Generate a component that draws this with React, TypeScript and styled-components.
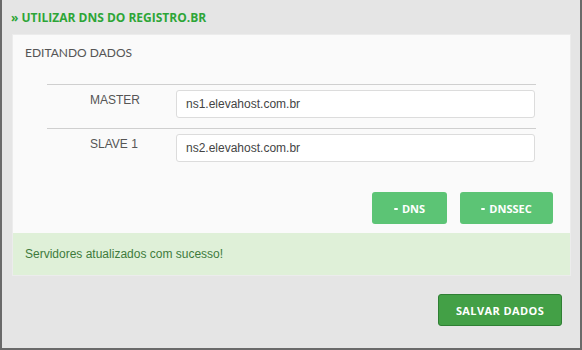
import React from 'react';
import styled, { createGlobalStyle } from 'styled-components';

const GlobalStyle = createGlobalStyle`
  html, body {
    margin: 0;
    padding: 0;
    background: #e5e5e5;
  }
  * {
    box-sizing: border-box;
  }
`;

interface DnsServer {
  label: string;
  value: string;
}

const servers: DnsServer[] = [
  { label: 'MASTER', value: 'ns1.elevahost.com.br' },
  { label: 'SLAVE 1', value: 'ns2.elevahost.com.br' },
];

const App = () => {
  return (
    <>
      <GlobalStyle />
      <Frame>
        <Title>» UTILIZAR DNS DO REGISTRO.BR</Title>
        <Panel>
          <PanelBody>
            <PanelHeading>EDITANDO DADOS</PanelHeading>
            <ServerTable>
              {servers.map((server) => (
                <ServerRow key={server.label}>
                  <ServerLabel>{server.label}</ServerLabel>
                  <ServerInput defaultValue={server.value} />
                </ServerRow>
              ))}
            </ServerTable>
            <Actions>
              <LightButton width={75}>
                <Dash /> DNS
              </LightButton>
              <LightButton width={93}>
                <Dash /> DNSSEC
              </LightButton>
            </Actions>
          </PanelBody>
          <SuccessAlert>Servidores atualizados com sucesso!</SuccessAlert>
        </Panel>
        <Footer>
          <SaveButton>SALVAR DADOS</SaveButton>
        </Footer>
      </Frame>
    </>
  );
};

export default App;

const Frame = styled.div`
  width: 582px;
  height: 350px;
  background: #e5e5e5;
  border-left: 2px solid #6a6a6a;
  border-right: 2px solid #6a6a6a;
  border-bottom: 2px solid #6a6a6a;
  display: flex;
  flex-direction: column;
`;

const Title = styled.div`
  padding: 9px 0 0 9px;
  height: 34px;
  font-family: 'Open Sans', 'Liberation Sans', sans-serif;
  font-weight: 700;
  font-size: 12px;
  color: #2da537;
`;

const Panel = styled.div`
  margin: 0 9px 0 10px;
  border: 1px solid #ececec;
  background: #fafafa;
`;

const PanelBody = styled.div`
  padding: 0 17px 9px 12px;
`;

const PanelHeading = styled.div`
  height: 49px;
  padding-top: 10px;
  font-family: Lato, 'Liberation Sans', sans-serif;
  font-size: 12px;
  color: #555;
`;

const ServerTable = styled.div`
  margin: 0 17px 0 22px;
`;

const ServerRow = styled.div`
  display: flex;
  align-items: flex-start;
  border-top: 1px solid #cfcfcf;
  padding: 5px 1px 10px 0;
`;

const ServerLabel = styled.div`
  width: 129px;
  padding: 3px 0 0 43px;
  font-family: 'Liberation Sans', Arial, sans-serif;
  font-size: 12px;
  color: #555;
`;

const ServerInput = styled.input`
  flex: 1;
  height: 28px;
  border: 1px solid #dcdcdc;
  border-radius: 3px;
  background: #fff;
  padding: 0 9px;
  font-family: 'Liberation Sans', Arial, sans-serif;
  font-size: 12px;
  color: #444;
  outline: none;
`;

const Actions = styled.div`
  display: flex;
  justify-content: flex-end;
  gap: 13px;
  margin-top: 20px;
`;

const LightButton = styled.button<{ width: number }>`
  width: ${({ width }) => width}px;
  height: 32px;
  padding: 0;
  border: none;
  border-radius: 3px;
  background: #5cc475;
  color: #fff;
  font-family: 'Open Sans', 'Liberation Sans', sans-serif;
  font-weight: 700;
  font-size: 11px;
  display: flex;
  align-items: center;
  justify-content: center;
  gap: 4px;
`;

const Dash = styled.span`
  width: 4px;
  height: 2px;
  margin-top: 1px;
  border-radius: 1px;
  background: #fff;
`;

const SuccessAlert = styled.div`
  height: 42px;
  padding: 14px 12px 0;
  background: #dff0d8;
  color: #3e7b3c;
  font-family: 'Liberation Sans', Arial, sans-serif;
  font-size: 12px;
`;

const Footer = styled.div`
  display: flex;
  justify-content: flex-end;
  padding: 18px 18px 0 0;
`;

const SaveButton = styled.button`
  width: 124px;
  height: 32px;
  border: 1px solid #2f7f34;
  border-radius: 3px;
  background: #43a046;
  color: #fff;
  font-family: 'Open Sans', 'Liberation Sans', sans-serif;
  font-weight: 700;
  font-size: 11px;
  letter-spacing: 0.4px;
`;
